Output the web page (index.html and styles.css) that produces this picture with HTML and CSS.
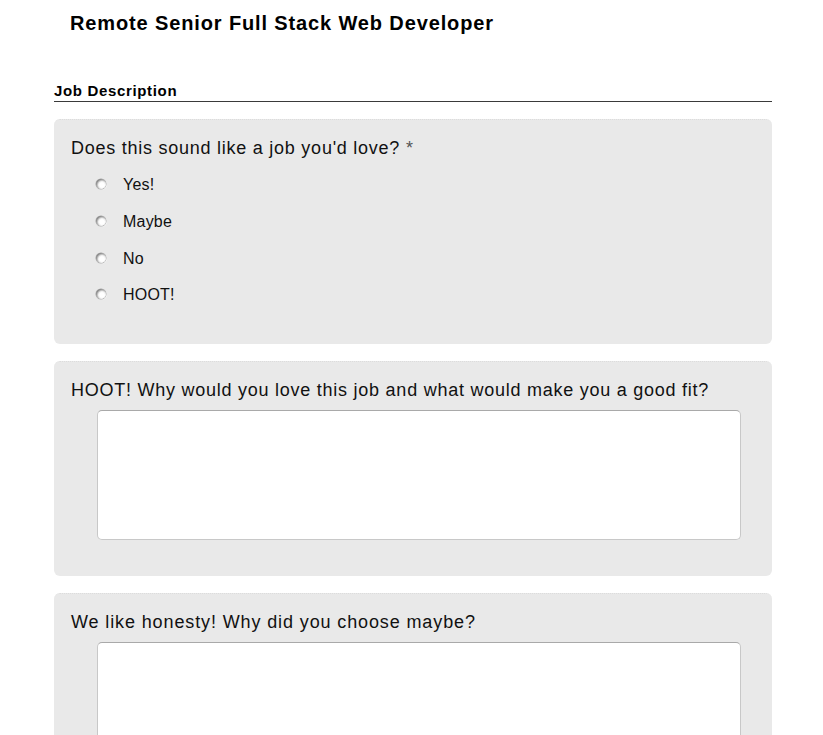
FILE: index.html
```html
<!DOCTYPE html>
<html>
<head>
<meta charset="utf-8">
<link rel="stylesheet" href="styles.css">
</head>
<body>
<div class="page">
  <h1 class="title">Remote Senior Full Stack Web Developer</h1>
  <h2 class="section">Job Description</h2>

  <div class="card card-radios">
    <div class="question">Does this sound like a job you'd love? <span class="req">*</span></div>
    <div class="options">
      <label class="option"><span class="radio"></span><span>Yes!</span></label>
      <label class="option"><span class="radio"></span><span>Maybe</span></label>
      <label class="option"><span class="radio"></span><span>No</span></label>
      <label class="option"><span class="radio"></span><span>HOOT!</span></label>
    </div>
  </div>

  <div class="card">
    <div class="question">HOOT! Why would you love this job and what would make you a good fit?</div>
    <div class="textarea"></div>
  </div>

  <div class="card">
    <div class="question q-wide">We like honesty! Why did you choose maybe?</div>
    <div class="textarea"></div>
  </div>
</div>
</body>
</html>
```

FILE: styles.css
```css
html, body {
  margin: 0;
  padding: 0;
  background: #ffffff;
}
body {
  font-family: "Liberation Sans", Arial, sans-serif;
  color: #111;
  overflow: hidden;
}
.page {
  width: 718px;
  margin-left: 54px;
  display: flex;
  flex-direction: column;
}
.title {
  margin: 11px 0 0 16px;
  font-size: 20px;
  line-height: 24px;
  font-weight: bold;
  letter-spacing: 0.87px;
  color: #000;
}
.section {
  margin: 47px 0 0 0;
  font-size: 15px;
  line-height: 18px;
  font-weight: bold;
  letter-spacing: 0.66px;
  color: #000;
  padding-bottom: 1px;
  border-bottom: 1.5px solid #3a3a3a;
}
.card {
  margin-top: 17px;
  background: #e9e9e9;
  border-radius: 6px;
  border-top: 1px dotted #dcdcdc;
  padding: 17px 17px 36px 17px;
  display: flex;
  flex-direction: column;
}
.card-radios {
  padding-bottom: 30px;
}
.question {
  font-size: 18px;
  line-height: 22px;
  letter-spacing: 0.75px;
  color: #111;
}
.q-wide {
  letter-spacing: 0.88px;
}
.req {
  color: #555;
}
.options {
  margin-top: 8px;
  display: flex;
  flex-direction: column;
}
.option {
  height: 36.67px;
  display: flex;
  align-items: center;
  padding-left: 25px;
  font-size: 16px;
  letter-spacing: 0.2px;
  color: #111;
}
.radio {
  width: 10px;
  height: 10px;
  border-radius: 50%;
  margin-right: 17px;
  margin-top: -2px;
  box-sizing: border-box;
  background: radial-gradient(circle at 60% 60%, #ffffff 0 28%, #eeeeee 42%, #7a7a7a 72%, #3c3c3c 100%);
  box-shadow: 0 0 0 0.5px #a0a0a0, 0.5px 0.5px 0 0.5px #f8f8f8;
}
.textarea {
  margin: 9px 14px 0 26px;
  height: 130px;
  background: #fff;
  border: 1px solid #c8c8c8;
  border-top-color: #a9a9a9;
  border-radius: 5px;
  box-sizing: border-box;
}
```
